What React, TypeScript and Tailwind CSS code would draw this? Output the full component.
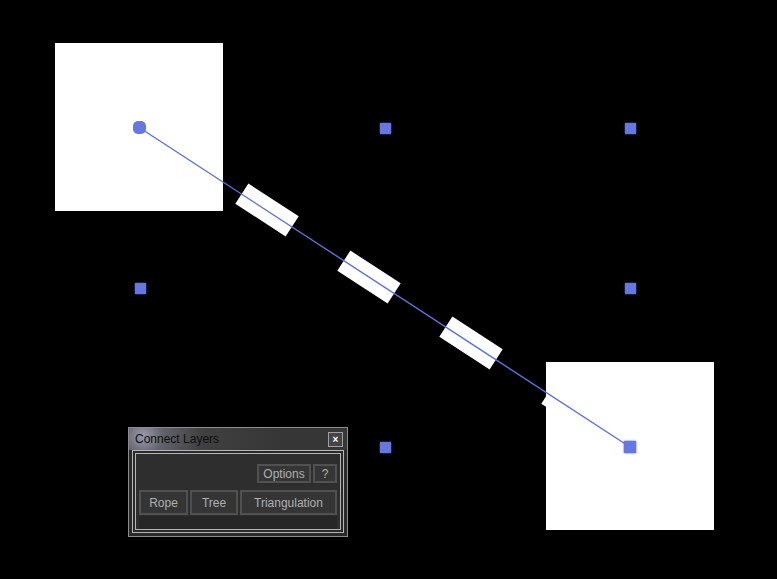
import React from "react";

const font = { fontFamily: '"Liberation Sans", Arial, sans-serif' };

function Anchor({ x, y, size = 11 }: { x: number; y: number; size?: number }) {
  return (
    <div
      className="absolute bg-[#6677e0] shadow-[0_0_2px_#4a5ac0]"
      style={{ left: x - size / 2, top: y - size / 2, width: size, height: size }}
    />
  );
}

function Link({ x, y }: { x: number; y: number }) {
  return (
    <div
      className="absolute w-[60px] h-[24px] bg-white rotate-[33deg]"
      style={{ left: x - 30, top: y - 12 }}
    />
  );
}

function Btn({ w, h, children }: { w: number; h: number; children: React.ReactNode }) {
  return (
    <div
      className="flex items-center justify-center border-2 border-[#515151] bg-[#353535] text-[12px] text-[#b0b0b0]"
      style={{ width: w, height: h }}
    >
      {children}
    </div>
  );
}

export default function App() {
  return (
    <div className="relative w-[777px] h-[579px] bg-black overflow-hidden" style={font}>
      {/* layers */}
      <div className="absolute left-[55px] top-[43px] w-[168px] h-[168px] bg-white" />
      <Link x={267} y={210} />
      <Link x={369} y={277} />
      <Link x={471} y={343} />
      <Link x={573} y={410} />
      <div className="absolute left-[546px] top-[362px] w-[168px] h-[168px] bg-white" />

      {/* rope line */}
      <svg className="absolute left-0 top-0" width={777} height={579}>
        <line x1={140} y1={128} x2={630} y2={447} stroke="#5d70d8" strokeWidth={1.4} />
      </svg>

      {/* anchors */}
      <div className="absolute left-[133px] top-[121px] w-[13px] h-[13px] rounded-[5px] bg-[#6677e0]" />
      <Anchor x={385} y={128} />
      <Anchor x={630} y={128} />
      <Anchor x={140} y={288} />
      <Anchor x={630} y={288} />
      <Anchor x={385} y={447} />
      <Anchor x={630} y={447} size={12} />

      {/* panel */}
      <div className="absolute left-[128px] top-[427px] w-[220px] h-[110px] border border-[#8c8c8c] bg-[#2a2a2a] flex flex-col">
        <div className="relative h-[22px] flex items-center pl-[6px] bg-[radial-gradient(circle_at_14px_8px,#9a9aac_0px,#62626c_20px,#404040_60px,#363636_140px)]">
          <span className="text-[12px] text-[#0e0e0e] leading-none">Connect Layers</span>
          <div className="absolute right-[4px] top-[4px] w-[15px] h-[15px] border border-[#a0a0a0] bg-[#444444] flex items-center justify-center text-white text-[10px] font-bold leading-none">
            ×
          </div>
        </div>
        <div className="mx-[3px] border border-[#b5b5b5] p-[2px] h-[83px]">
          <div className="h-full border border-[#b5b5b5] bg-[#2e2e2e] flex flex-col px-[3px] pt-[10px]">
            <div className="flex justify-end gap-[2px]">
              <Btn w={54} h={19}>Options</Btn>
              <Btn w={24} h={19}>?</Btn>
            </div>
            <div className="flex gap-[2px] mt-[7px]">
              <Btn w={49} h={25}>Rope</Btn>
              <Btn w={48} h={25}>Tree</Btn>
              <Btn w={97} h={25}>Triangulation</Btn>
            </div>
            <div className="flex-1 mt-[1px] bg-[#272727]" />
          </div>
        </div>
      </div>
    </div>
  );
}
